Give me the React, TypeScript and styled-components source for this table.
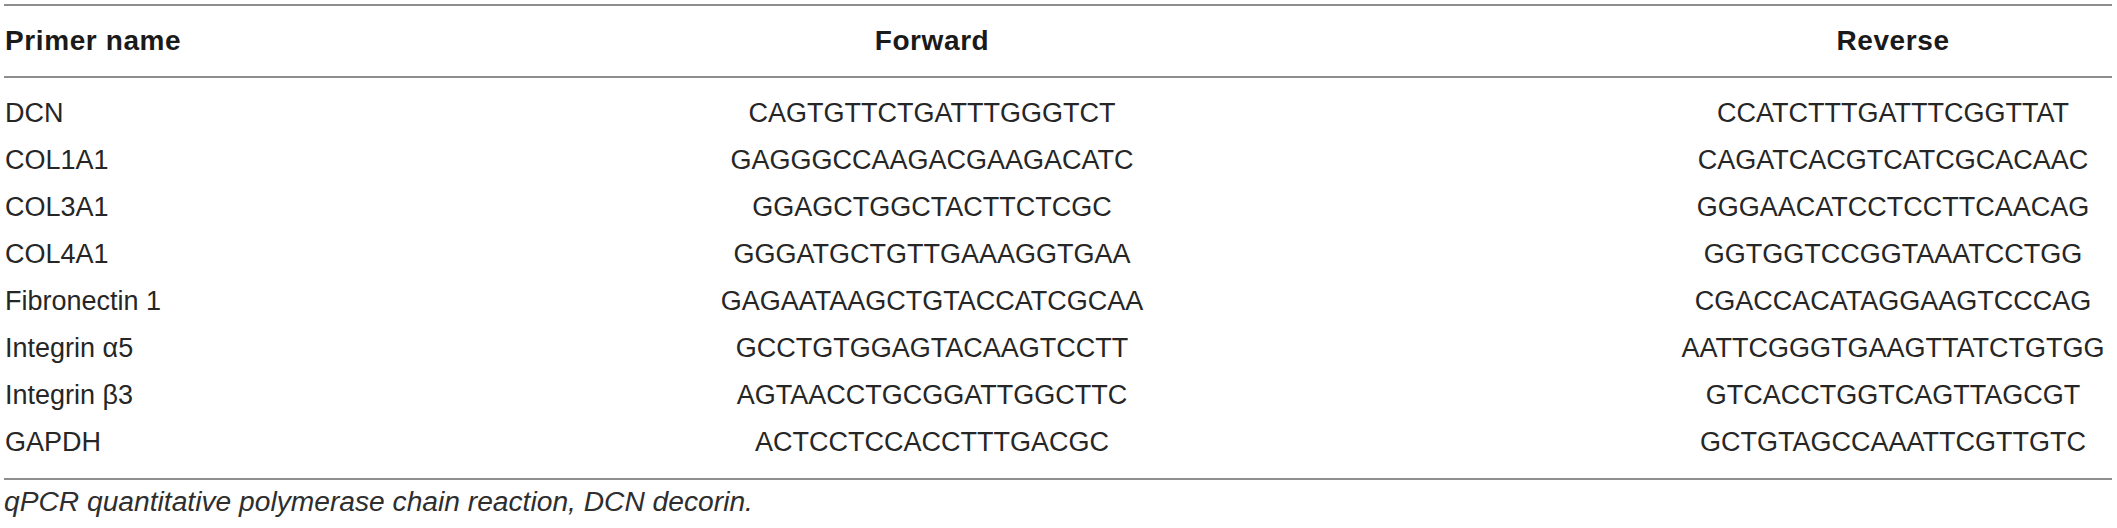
import { createGlobalStyle, styled } from "styled-components";

const GlobalStyle = createGlobalStyle`
  html, body {
    margin: 0;
    padding: 0;
    background: #fff;
  }
`;

type Primer = {
  name: string;
  forward: string;
  reverse: string;
};

const primers: Primer[] = [
  { name: "DCN", forward: "CAGTGTTCTGATTTGGGTCT", reverse: "CCATCTTTGATTTCGGTTAT" },
  { name: "COL1A1", forward: "GAGGGCCAAGACGAAGACATC", reverse: "CAGATCACGTCATCGCACAAC" },
  { name: "COL3A1", forward: "GGAGCTGGCTACTTCTCGC", reverse: "GGGAACATCCTCCTTCAACAG" },
  { name: "COL4A1", forward: "GGGATGCTGTTGAAAGGTGAA", reverse: "GGTGGTCCGGTAAATCCTGG" },
  { name: "Fibronectin 1", forward: "GAGAATAAGCTGTACCATCGCAA", reverse: "CGACCACATAGGAAGTCCCAG" },
  { name: "Integrin \u03b15", forward: "GCCTGTGGAGTACAAGTCCTT", reverse: "AATTCGGGTGAAGTTATCTGTGG" },
  { name: "Integrin \u03b23", forward: "AGTAACCTGCGGATTGGCTTC", reverse: "GTCACCTGGTCAGTTAGCGT" },
  { name: "GAPDH", forward: "ACTCCTCCACCTTTGACGC", reverse: "GCTGTAGCCAAATTCGTTGTC" },
];

const Page = styled.div`
  width: 2108px;
  padding: 4px 0 0 4px;
  font-family: "Liberation Sans", Arial, sans-serif;
  color: #222;
`;

const Table = styled.div`
  border-top: 2px solid #8e8e8e;
  border-bottom: 2px solid #8e8e8e;
`;

const Row = styled.div<{ $head?: boolean }>`
  display: grid;
  grid-template-columns: 186px 1484px 1fr;
  align-items: center;
  height: ${(p) => (p.$head ? "70px" : "47px")};
  font-size: ${(p) => (p.$head ? "28px" : "27px")};
  font-weight: ${(p) => (p.$head ? 700 : 400)};
  letter-spacing: ${(p) => (p.$head ? "0.6px" : "0")};
  color: ${(p) => (p.$head ? "#1a1a1a" : "#262626")};
  border-bottom: ${(p) => (p.$head ? "2px solid #8e8e8e" : "none")};
`;

const Body = styled.div`
  padding: 12px 0 12px;
`;

const Cell = styled.div<{ $align?: "left" | "center" }>`
  text-align: ${(p) => p.$align ?? "center"};
  padding-left: ${(p) => (p.$align === "left" ? "1px" : "0")};
  white-space: nowrap;
`;

const Note = styled.p`
  margin: 0;
  height: 42px;
  line-height: 42px;
  font-size: 28.2px;
  font-style: italic;
  color: #2e2e2e;
`;

export default function App() {
  return (
    <>
      <GlobalStyle />
      <Page>
        <Table>
          <Row $head>
            <Cell $align="left">Primer name</Cell>
            <Cell>Forward</Cell>
            <Cell>Reverse</Cell>
          </Row>
          <Body>
            {primers.map((p) => (
              <Row key={p.name}>
                <Cell $align="left">{p.name}</Cell>
                <Cell>{p.forward}</Cell>
                <Cell>{p.reverse}</Cell>
              </Row>
            ))}
          </Body>
        </Table>
        <Note>qPCR quantitative polymerase chain reaction, DCN decorin.</Note>
      </Page>
    </>
  );
}
